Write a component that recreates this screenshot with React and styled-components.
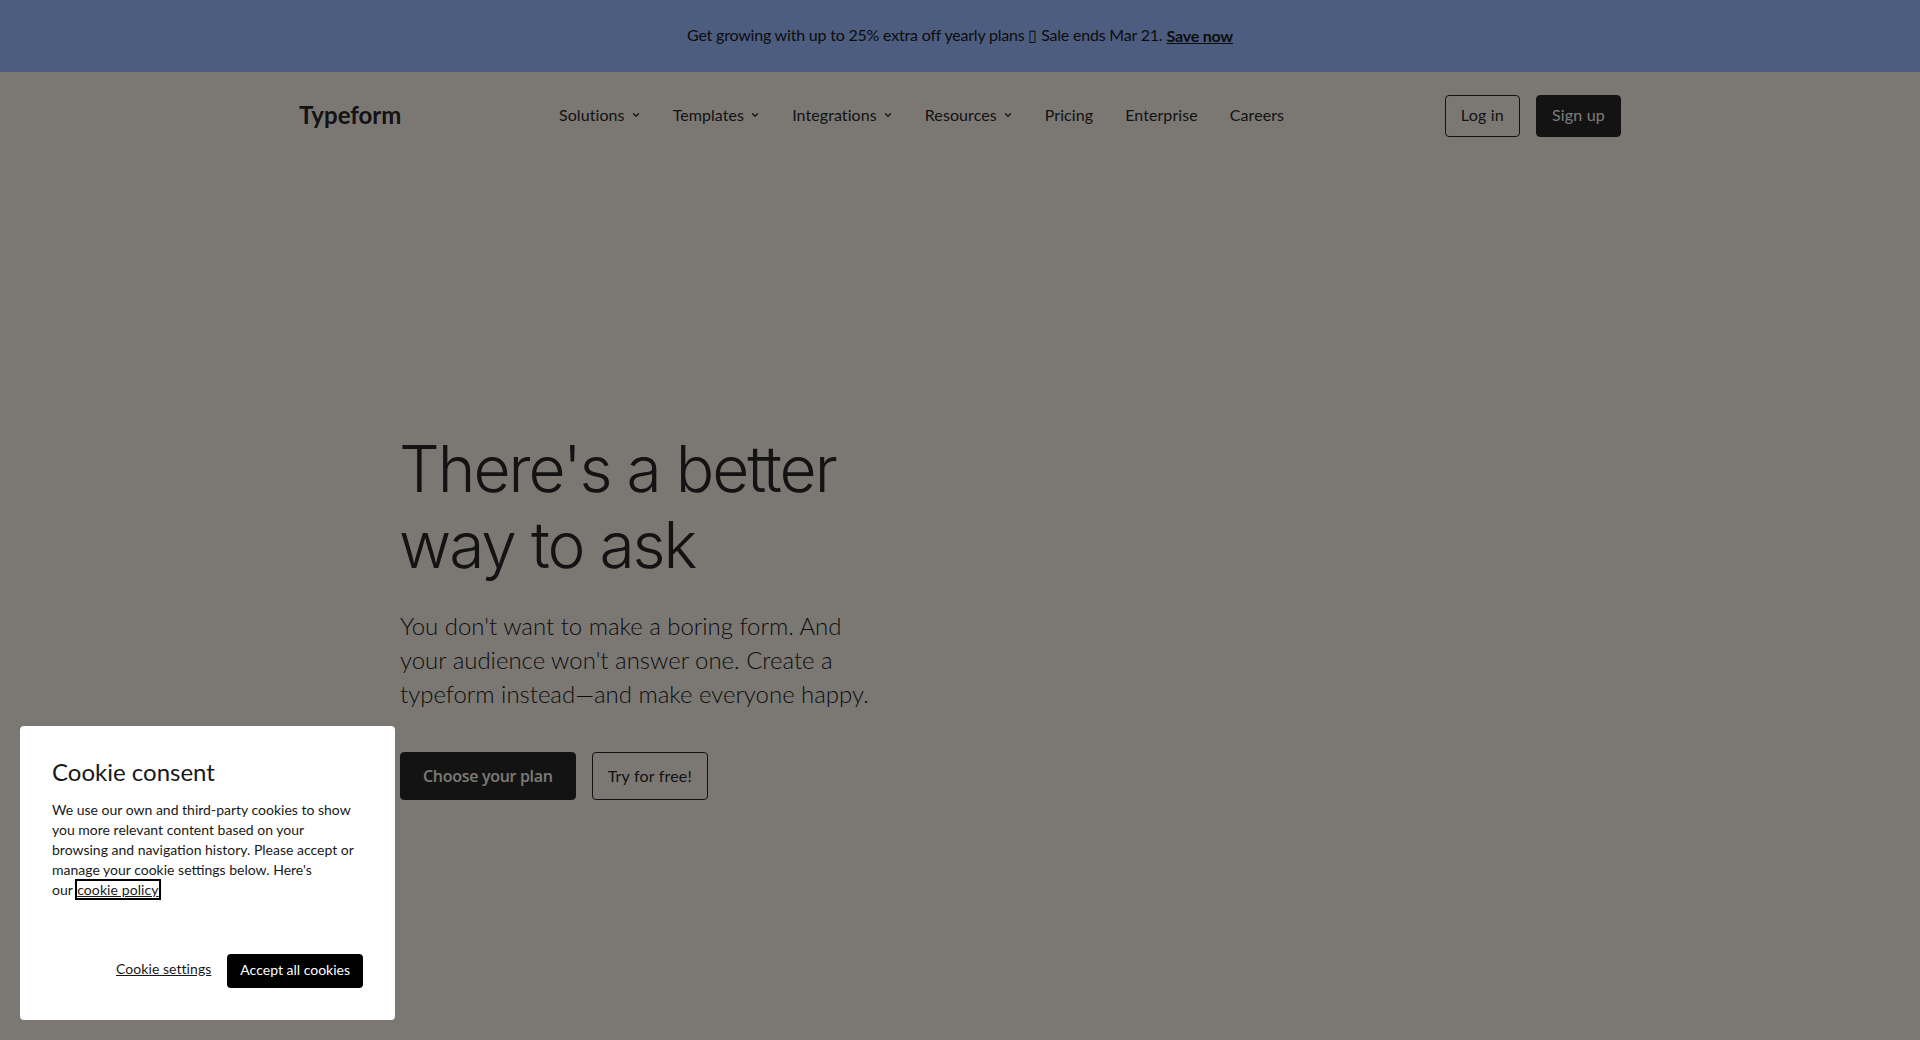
import React from 'react'
import styled, { createGlobalStyle } from 'styled-components'
import { ChevronDown } from 'lucide-react'

const GlobalStyle = createGlobalStyle`
html, body { margin:0; padding:0; }
body { background:#f6f1e9; font-family:"Lato","Noto Sans",sans-serif; color:#262627; overflow:hidden; }
a { color:inherit; text-decoration:none; }
`
const Page = styled.div`
display:flex;
flex-direction:column;
height:1040px;
`
const Banner = styled.div`
display:flex;
justify-content:center;
align-items:center;
box-sizing:border-box;
height:72px;
padding-bottom:2px;
background:#98baff;
font-size:16px;
letter-spacing:-.2px;
color:#191919;
`
const BannerLink = styled.a`
font-weight:700;
text-decoration:underline;
margin-left:4px;
`
const Nav = styled.header`
display:flex;
align-items:center;
height:84px;
padding:0 299px;
`
const Logo = styled.a`
width:260px;
font-size:24px;
font-weight:700;
color:#262627;
`
const Menu = styled.nav`
display:flex;
align-items:center;
gap:32px;
flex:1;
`
const MenuItem = styled.a`
display:flex;
align-items:center;
gap:6px;
font-size:16px;
letter-spacing:.08px;
color:#262627;
svg { margin-top:2px; }
`
const Actions = styled.div`
display:flex;
gap:16px;
margin-top:4px;
`
const Button = styled.a`
display:flex;
align-items:center;
justify-content:center;
box-sizing:border-box;
height:${props => props.$tall ? '48px' : '42px'};
padding:0 ${props => props.$pad || 15}px ${props => props.$tall ? 2 : 4}px;
border-radius:4px;
font-size:16px;
letter-spacing:.2px;
border:1px solid #262627;
background:${props => props.$solid ? '#262627' : 'transparent'};
color:${props => props.$solid ? '#f6f3ec' : '#262627'};
`
const PlanButton = styled(Button)`
padding-bottom:0;
font-family:"Open Sans",sans-serif;
font-weight:600;
letter-spacing:-.3px;
`
const Hero = styled.main`
display:flex;
flex-direction:column;
padding:275px 0 0 399px;
`
const Title = styled.h1`
margin:0;
font-family:"Inter",sans-serif;
font-size:64px;
line-height:76px;
font-weight:300;
letter-spacing:-2px;
color:#262627;
`
const Sub = styled.p`
margin:26px 0 0 1px;
width:485px;
font-size:24px;
line-height:34px;
font-weight:300;
letter-spacing:-.03px;
color:#191919;
`
const HeroActions = styled.div`
display:flex;
gap:16px;
margin:41px 0 0 1px;
`
const Overlay = styled.div`
position:fixed;
inset:0;
background:rgba(0,0,0,.5);
`
const CookieCard = styled.section`
position:fixed;
left:20px;
bottom:20px;
box-sizing:border-box;
width:375px;
height:294px;
display:flex;
flex-direction:column;
padding:31px 32px 32px;
background:#fff;
border-radius:4px;
color:#000;
`
const CookieTitle = styled.h2`
margin:0;
font-size:24px;
line-height:30px;
font-weight:400;
color:#191919;
`
const CookieText = styled.p`
margin:13px 0 0;
font-size:14px;
line-height:20px;
color:#191919;
`
const PolicyLink = styled.a`
margin-left:1px;
letter-spacing:.1px;
text-decoration:underline;
outline:2px solid #000;
`
const CookieActions = styled.div`
display:flex;
align-items:center;
justify-content:flex-end;
gap:16px;
margin-top:auto;
`
const SettingsLink = styled.a`
font-size:14px;
letter-spacing:.05px;
margin-bottom:6px;
text-decoration:underline;
color:#191919;
`
const AcceptButton = styled.a`
display:flex;
align-items:center;
box-sizing:border-box;
height:34px;
padding:0 13px 3px;
background:#000;
color:#fff;
border-radius:4px;
font-size:14px;
`

const menu = [
    { label: 'Solutions', drop: true },
    { label: 'Templates', drop: true },
    { label: 'Integrations', drop: true },
    { label: 'Resources', drop: true },
    { label: 'Pricing' },
    { label: 'Enterprise' },
    { label: 'Careers' },
]

const App = () => {
    return (
        <>
            <GlobalStyle />
            <Page>
                <Banner>
                    Get growing with up to 25% extra off yearly plans ▯ Sale ends Mar 21.
                    <BannerLink href="#">Save now</BannerLink>
                </Banner>
                <Nav>
                    <Logo href="#">Typeform</Logo>
                    <Menu>
                        {menu.map(item => (
                            <MenuItem href="#" key={item.label}>
                                {item.label}
                                {item.drop && <ChevronDown size={10} strokeWidth={3} />}
                            </MenuItem>
                        ))}
                    </Menu>
                    <Actions>
                        <Button href="#">Log in</Button>
                        <Button href="#" $solid>Sign up</Button>
                    </Actions>
                </Nav>
                <Hero>
                    <Title>There's a better<br />way to ask</Title>
                    <Sub>You don't want to make a boring form. And your audience won't answer one. Create a typeform instead—and make everyone happy.</Sub>
                    <HeroActions>
                        <PlanButton href="#" $tall $solid $pad={22}>Choose your plan</PlanButton>
                        <Button href="#" $tall $pad={15}>Try for free!</Button>
                    </HeroActions>
                </Hero>
            </Page>
            <Overlay />
            <CookieCard>
                <CookieTitle>Cookie consent</CookieTitle>
                <CookieText>
                    We use our own and third-party cookies to show you more relevant content based on your browsing and navigation history. Please accept or manage your cookie settings below. Here's<br />our <PolicyLink href="#">cookie policy</PolicyLink>
                </CookieText>
                <CookieActions>
                    <SettingsLink href="#">Cookie settings</SettingsLink>
                    <AcceptButton href="#">Accept all cookies</AcceptButton>
                </CookieActions>
            </CookieCard>
        </>
    )
}
export default App
